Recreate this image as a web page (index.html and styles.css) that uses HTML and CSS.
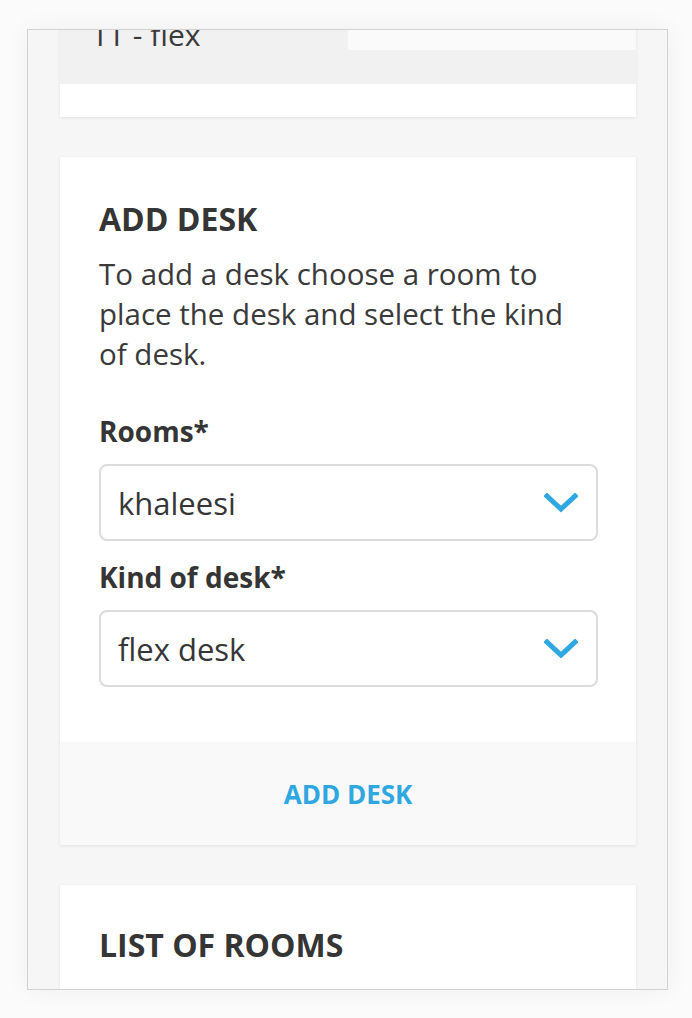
FILE: index.html
```html
<!DOCTYPE html>
<html lang="en">
<head>
<meta charset="utf-8">
<title>Add desk</title>
<link rel="stylesheet" href="styles.css">
</head>
<body>
<div class="frame">
  <div class="screen">
    <section class="card card-top">
      <div class="row-gray">
        <div class="cell-name">TT - flex</div>
        <div class="cell-value"></div>
      </div>
      <div class="row-blank"></div>
    </section>

    <section class="card">
      <div class="card-body">
        <h2 class="title">ADD DESK</h2>
        <p class="intro">To add a desk choose a room to place the desk and select the kind of desk.</p>
        <div class="field">
          <div class="label">Rooms*</div>
          <div class="select">
            <span class="select-text">khaleesi</span>
            <svg class="chev" width="34" height="20" viewBox="0 0 34 20"><polyline points="3,3 17,16 31,3" fill="none" stroke="#2fa7e0" stroke-width="5" stroke-linecap="square" stroke-linejoin="miter"/></svg>
          </div>
        </div>
        <div class="field">
          <div class="label">Kind of desk*</div>
          <div class="select">
            <span class="select-text">flex desk</span>
            <svg class="chev" width="34" height="20" viewBox="0 0 34 20"><polyline points="3,3 17,16 31,3" fill="none" stroke="#2fa7e0" stroke-width="5" stroke-linecap="square" stroke-linejoin="miter"/></svg>
          </div>
        </div>
      </div>
      <div class="card-footer">
        <span class="action">ADD DESK</span>
      </div>
    </section>

    <section class="card">
      <div class="card-body card-body-list">
        <h2 class="title">LIST OF ROOMS</h2>
      </div>
    </section>
  </div>
</div>
</body>
</html>
```

FILE: styles.css
```css
html, body {
  margin: 0;
  padding: 0;
}
body {
  background: #fbfbfb;
  font-family: "Open Sans", "Liberation Sans", sans-serif;
  color: #363636;
  width: 692px;
  height: 1018px;
  overflow: hidden;
}
.frame {
  margin: 29px 0 0 27px;
  width: 639px;
  height: 959px;
  border: 1px solid #d2d2d2;
  background: #f6f6f6;
  overflow: hidden;
  box-shadow: 0 0 24px rgba(0, 0, 0, 0.05);
}
.screen {
  padding: 0 31px 0 32px;
  display: flex;
  flex-direction: column;
  gap: 40px;
}
.card {
  background: #ffffff;
  box-shadow: 0 1px 3px rgba(0, 0, 0, 0.09);
}
.card-top {
  margin-top: -20px;
}
.row-gray {
  display: flex;
  height: 74px;
  background: #f1f1f1;
}
.cell-name {
  width: 288px;
  box-sizing: border-box;
  padding: 5px 0 0 32px;
  font-size: 30px;
  line-height: 40px;
  color: #3a3a3a;
}
.cell-value {
  flex: 1;
  height: 40px;
  background: #fafafa;
}
.row-blank {
  height: 33px;
}
.card-body {
  padding: 42px 38px 55px 39px;
}
.title {
  margin: 0;
  font-size: 32px;
  line-height: 40px;
  font-weight: 700;
  color: #353535;
}
.intro {
  margin: 15px 0 0;
  font-size: 29.5px;
  line-height: 40px;
  color: #3a3a3a;
}
.field {
  margin-top: 37px;
}
.field + .field {
  margin-top: 16px;
}
.label {
  font-size: 28px;
  line-height: 40px;
  font-weight: 700;
  color: #353535;
  margin-bottom: 13px;
}
.select {
  box-sizing: border-box;
  height: 77px;
  border: 2px solid #dcdcdc;
  border-radius: 8px;
  display: flex;
  align-items: center;
  justify-content: space-between;
  padding: 0 18px 0 17px;
}
.select-text {
  font-size: 31px;
  line-height: 40px;
  color: #363636;
}
.chev {
  display: block;
  margin-top: 1px;
}
.card-footer {
  height: 103px;
  background: #f9f9f9;
  display: flex;
  align-items: center;
  justify-content: center;
}
.action {
  font-size: 26px;
  font-weight: 700;
  color: #2fa7e0;
  line-height: 30px;
}
.card-body-list {
  padding-top: 40px;
  height: 200px;
}
```
